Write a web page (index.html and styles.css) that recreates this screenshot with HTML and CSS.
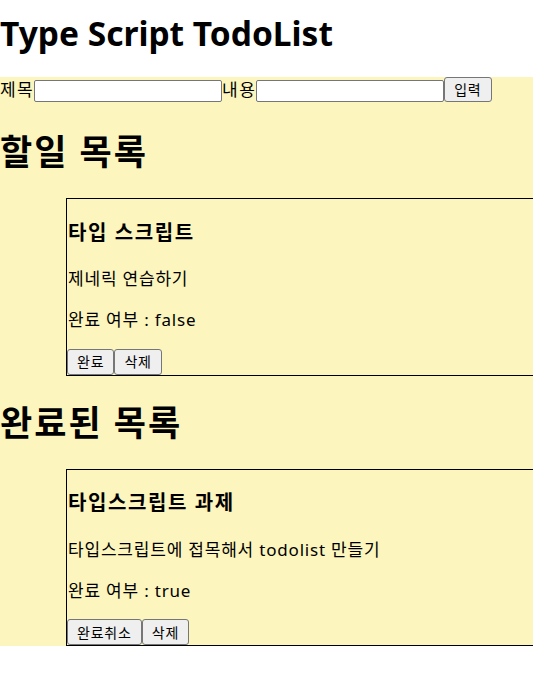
FILE: index.html
```html
<!DOCTYPE html>
<html>
  <head>
    <meta charset="utf-8" />
    <link rel="stylesheet" href="styles.css">
    <title>Type Script TodoList</title>
  </head>
  <body>
    <div class="top">
      <h1 class="page-title">Type Script TodoList</h1>
    </div>
    <div class="board">
      <form class="add-form">
        <label>제목</label><input type="text" class="add-input" /><label>내용</label><input type="text" class="add-input" /><button type="button" class="btn">입력</button>
      </form>

      <h2 class="section-title">할일 목록</h2>
      <div class="card">
        <h3 class="card-title">타입 스크립트</h3>
        <p class="card-text">제네릭 연습하기</p>
        <p class="card-text">완료 여부 : false</p>
        <div class="card-actions"><button type="button" class="btn">완료</button><button type="button" class="btn">삭제</button></div>
      </div>

      <h2 class="section-title">완료된 목록</h2>
      <div class="card">
        <h3 class="card-title">타입스크립트 과제</h3>
        <p class="card-text">타입스크립트에 접목해서 todolist 만들기</p>
        <p class="card-text">완료 여부 : true</p>
        <div class="card-actions"><button type="button" class="btn">완료취소</button><button type="button" class="btn">삭제</button></div>
      </div>
    </div>
  </body>
</html>
```

FILE: styles.css
```css
body {
  margin: 0;
  font-family: "Noto Sans", "Noto Sans CJK KR", sans-serif;
  line-height: 1.58;
  color: #000;
}

.top {
  height: 77px;
}

.page-title {
  margin: 0;
  padding-top: 8px;
  font-size: 33.5px;
  line-height: 50px;
}

.board {
  background-color: #fcf5be;
  overflow: hidden;
}

.add-form {
  display: flex;
  align-items: flex-end;
  height: 25px;
  padding-bottom: 3px;
  font-size: 17px;
  line-height: 25px;
  letter-spacing: 1.4px;
}

.add-input {
  box-sizing: border-box;
  width: 188px;
  height: 22px;
  margin: 0;
  padding: 1px 2px;
  border: 1px solid #767676;
  border-radius: 2px;
  background: white;
}

.btn {
  box-sizing: border-box;
  height: 25px;
  margin: 0;
  padding: 0 9px;
  font-family: "Noto Sans", "Noto Sans CJK KR", sans-serif;
  font-size: 14px;
  letter-spacing: 0.8px;
  line-height: 21px;
  color: #000;
  background-color: #efefef;
  border: 1px solid #767676;
  border-radius: 3px;
}

.section-title {
  margin: 21px 0;
  font-size: 35px;
  line-height: 51px;
  letter-spacing: 2px;
}

.card {
  margin-left: 66px;
  width: 100%;
  border: 1px solid #000;
  padding-left: 1px;
}

.card-title {
  margin: 18.72px 0;
  font-size: 20px;
  line-height: 29.6px;
  letter-spacing: 1.6px;
}

.card-text {
  margin: 16px 0;
  font-size: 17px;
  line-height: 25.3px;
  letter-spacing: 0.8px;
}

.card-actions {
  display: flex;
  margin-left: -1px;
}

.card-actions .btn {
  height: 26px;
}
```
